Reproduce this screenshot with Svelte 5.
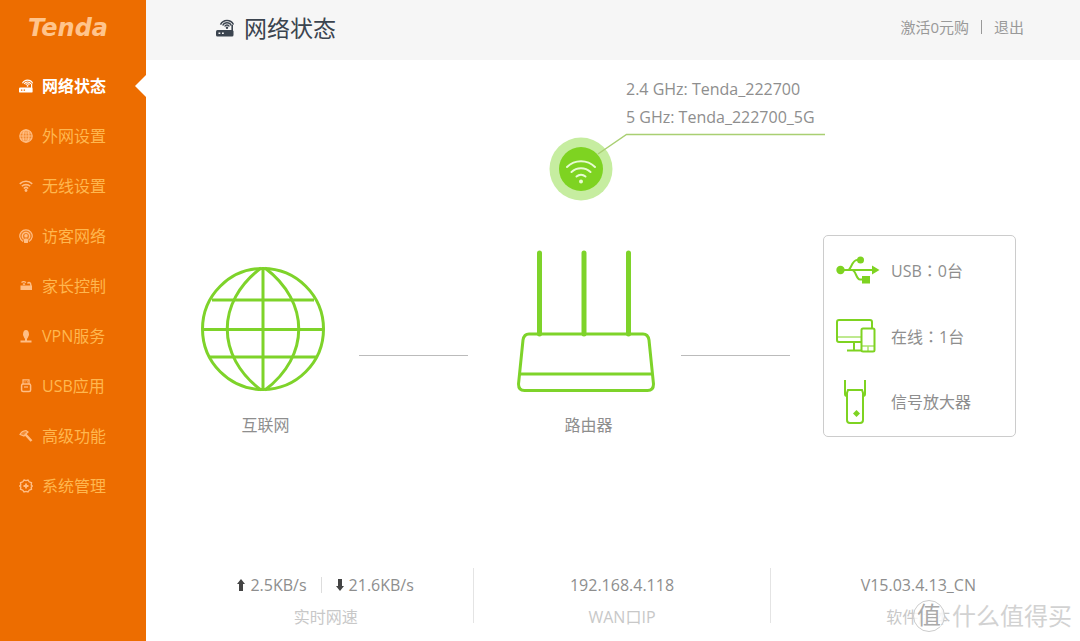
<script>
  const menu = [
    { icon: "router", label: "网络状态" },
    { icon: "globe", label: "外网设置" },
    { icon: "wifi", label: "无线设置" },
    { icon: "guest", label: "访客网络" },
    { icon: "parent", label: "家长控制" },
    { icon: "vpn", label: "VPN服务" },
    { icon: "usb", label: "USB应用" },
    { icon: "tool", label: "高级功能" },
    { icon: "gear", label: "系统管理" },
  ]

  const networks = ["2.4 GHz: Tenda_222700", "5 GHz: Tenda_222700_5G"]

  const devices = [
    { icon: "usb", label: "USB", count: "0台" },
    { icon: "online", label: "在线", count: "1台" },
    { icon: "extender", label: "信号放大器" },
  ]

  let active = $state("router")
</script>

{#snippet routerIcon(size)}
  <svg width={size} height={size} viewBox="0 0 18 18" fill="none" stroke="currentColor">
    <path d="M1.500 11h14.500q1.500 0 1.500 1.500v3.500q0 1.500-1.500 1.500h-14.500q-1.500 0-1.500-1.500v-3.500q0-1.500 1.500-1.500z" fill="currentColor" stroke="none" />
    <path d="M16.200 12V6" stroke-width="1.600" />
    <path d="M8.700 7.500a2.600 2.600 0 0 1 4.600 0M6.700 6.500a4.800 4.800 0 0 1 8.600 0M4.500 5.600a7.200 7.200 0 0 1 13 0" stroke-width="1.500" />
    <circle cx="11" cy="8.800" r="1.200" fill="currentColor" stroke="none" />
    <path d="M2.500 14.300h1.800M6 14.300h1.800" class="led" stroke-width="1.600" />
  </svg>
{/snippet}

{#snippet menuIcon(name)}
  {#if name === "router"}
    {@render routerIcon(14)}
  {:else}
    <svg width="14" height="14" viewBox="0 0 14 14" fill="none" stroke="currentColor" stroke-width="1.200">
      {#if name === "globe"}
        <circle cx="7" cy="7" r="6.200" fill="currentColor" fill-opacity="0.350" />
        <ellipse cx="7" cy="7" rx="3" ry="6.200" />
        <path d="M7 1v12M1 7h12M2 4h10M2 10h10" stroke-width="0.900" />
      {:else if name === "wifi"}
        <path d="M.8 4.800a9 9 0 0 1 12.400 0M2.800 7.300a6 6 0 0 1 8.400 0M4.800 9.500a3.200 3.200 0 0 1 4.400 0" stroke-width="1.600" />
        <circle cx="7" cy="11.500" r="1.400" fill="currentColor" stroke="none" />
      {:else if name === "guest"}
        <circle cx="7" cy="6.500" r="5.500" fill="currentColor" fill-opacity="0.250" stroke="none" />
        <path d="M4 12.500a6.200 6.200 0 1 1 6 0" />
        <path d="M4.500 9.800a3.700 3.700 0 1 1 5 0" />
        <circle cx="7" cy="6.800" r="1.700" fill="currentColor" stroke="none" />
        <path d="M4.500 10.500q2.500-2 5 0L8.800 14H5.200z" fill="currentColor" stroke="none" />
      {:else if name === "parent"}
        <path d="M1.500 6.500h11.500v4.500H1.500z" fill="currentColor" stroke="none" />
        <path d="M2.500 3.500q2-1.800 4.500 0M4 5.500q1-1 2 0M8.500 4.500q1.500-2 3 0L12 7" stroke-width="1.400" />
      {:else if name === "vpn"}
        <path d="M4 6q0-5 3-5t3 5L8.500 9.500h-3z" fill="currentColor" stroke="none" />
        <path d="M7 9v3M1.500 12.500h11" stroke-width="2" />
      {:else if name === "usb"}
        <path d="M4 5V.8h6V5M5.500 2.800h1M7.800 2.800h1" />
        <rect x="2.600" y="5" width="9" height="7.500" rx="1.500" stroke-width="1.500" />
        <path d="M5 8h4" />
      {:else if name === "tool"}
        <path d="M1 5.500Q2.500 2 7 1.500L9 3 6.500 5.200 5 7z" fill="currentColor" fill-opacity="0.400" />
        <path d="M6.500 5.500L12.500 12" stroke-width="2.500" />
      {:else}
        <path d="M5 1l2 .6L9 1l1.200 1.800 2.300 1L12.200 6l1 1-1 1.200.3 2-2.300 1L9 13l-2-.6L5 13l-1.200-1.800-2.300-1L1.800 8 .8 7l1-1-.3-2.200 2.300-1z" stroke-width="1.400" />
        <path d="M7 4.500v5M4.500 7h5" stroke-width="1.800" />
      {/if}
    </svg>
  {/if}
{/snippet}

{#snippet deviceIcon(name)}
  <svg width="44" height="46" viewBox="0 0 44 46" fill="none" stroke="currentColor" stroke-width="2">
    {#if name === "usb"}
      <circle cx="4.500" cy="23" r="4.200" fill="currentColor" stroke="none" />
      <path d="M4 23h34" />
      <path d="M43.500 23L36 18.500v9z" fill="currentColor" stroke="none" />
      <path d="M12 23c3 0 4-10 9-10h4M16 23c4 0 4 9.500 8 9.500h4" />
      <circle cx="24.500" cy="13" r="3.500" fill="currentColor" stroke="none" />
      <rect x="26" y="29" width="8" height="7.500" fill="currentColor" stroke="none" />
    {:else if name === "online"}
      <path d="M26 29H3q-2 0-2-2V9q0-2 2-2h31q2 0 2 2v6" />
      <path d="M2 24h24" stroke-width="1" />
      <path d="M18 29v8M11 37.500h15" />
      <rect x="25.500" y="15.500" width="13" height="23" rx="1.500" />
      <path d="M26 33h12" stroke-width="1" />
      <path d="M32 33.500v4.500" stroke-width="1" />
    {:else}
      <path d="M9 1v14q0 2 2 2M29 1v14q0 2-2 2" />
      <path d="M12 11h14l1 3v27q0 3-3 3H14q-3 0-3-3V14z" />
      <path d="M20.500 31l3.500 3.500-3.500 3.500-3.500-3.500z" fill="currentColor" stroke="none" />
    {/if}
  </svg>
{/snippet}

<div class="page">
  <aside>
    <div class="logo">Tenda</div>
    <nav>
      {#each menu as item}
        <button class="item" class:active={active === item.icon} onclick={() => (active = item.icon)}>
          {@render menuIcon(item.icon)}
          <span>{item.label}</span>
        </button>
      {/each}
    </nav>
  </aside>

  <div class="main">
    <header>
      <h1>{@render routerIcon(18)}网络状态</h1>
      <div class="links">
        <a href="#activate">激活0元购</a>
        <span class="bar"></span>
        <a href="#logout">退出</a>
      </div>
    </header>

    <main>
      <figure class="internet">
        <svg width="124" height="126" viewBox="0 0 124 126" fill="none" stroke="currentColor" stroke-width="3">
          <circle cx="62" cy="63" r="60.500" />
          <path d="M62 2v122M2 63.500h120M11 34h102M9 91h106" />
          <path d="M60 2C15 36 15 90 60 124M64 2c45 34 45 88 0 122" />
        </svg>
        <figcaption>互联网</figcaption>
      </figure>

      <span class="link-line"></span>

      <div class="router">
        <div class="callout">
          <ul>
            {#each networks as network}
              <li>{network}</li>
            {/each}
          </ul>
          <svg width="276" height="68" viewBox="0 0 276 68" fill="none">
            <circle cx="32" cy="36" r="31.500" fill="#c6eda0" />
            <circle cx="32" cy="36" r="22" fill="#7ed321" />
            <path d="M49 21L77.500 1.500H276" stroke="#a9cf72" stroke-width="1.500" />
            <g stroke="#e8fbd2" stroke-width="2" stroke-linecap="round">
              <path d="M18 34a20 20 0 0 1 28 0M22.500 39a14 14 0 0 1 19 0M27.500 43.500a7 7 0 0 1 9 0" />
            </g>
            <circle cx="32" cy="48.500" r="2" fill="#e8fbd2" />
          </svg>
        </div>
        <figure>
          <svg width="138" height="142" viewBox="0 0 138 142" fill="none" stroke="currentColor" stroke-width="3">
            <path d="M22.500 3v81M67 3v81M111.500 3v81" stroke-width="5" stroke-linecap="round" />
            <path d="M12 84h114q5 0 6 6l4.500 44q0 6.500-6 6.500H7.500q-6 0-6-6.500L6 90q1-6 6-6z" />
            <path d="M3 124h132" />
          </svg>
          <figcaption>路由器</figcaption>
        </figure>
      </div>

      <span class="link-line right"></span>

      <ul class="devices">
        {#each devices as device}
          <li>
            {@render deviceIcon(device.icon)}
            <span>{device.label}{#if device.count}<span class="colon">：</span>{device.count}{/if}</span>
          </li>
        {/each}
      </ul>
    </main>

    <footer>
      <div class="stat">
        <p class="value speed">
          <svg width="8" height="12" viewBox="0 0 8 12"><path d="M4 0l4 5H6v7H2V5H0z" fill="#444" /></svg>
          2.5KB/s
          <span class="sep"></span>
          <svg width="8" height="12" viewBox="0 0 8 12"><path d="M4 12L0 7h2V0h4v7h2z" fill="#444" /></svg>
          21.6KB/s
        </p>
        <p class="name">实时网速</p>
      </div>
      <span class="divider"></span>
      <div class="stat">
        <p class="value">192.168.4.118</p>
        <p class="name">WAN口IP</p>
      </div>
      <span class="divider"></span>
      <div class="stat">
        <p class="value">V15.03.4.13_CN</p>
        <p class="name">软件版本</p>
      </div>
    </footer>
  </div>

  <div class="watermark"><span class="badge">值</span>什么值得买</div>
</div>

<style>
  .page {
    position: relative;
    display: flex;
    min-height: 100vh;
    overflow: hidden;
    background: #fff;
    color: #8e8e8e;
    font-family: "Open Sans", "Noto Sans CJK SC", sans-serif;
    font-size: 16px;
    line-height: 24px;
  }

  svg {
    flex: none;
    display: block;
  }

  ul,
  p,
  h1,
  figure {
    margin: 0;
    padding: 0;
    list-style: none;
  }

  aside {
    flex: none;
    width: 146px;
    background: #ed6d00;
  }

  .logo {
    padding-left: 28px;
    height: 61px;
    line-height: 56px;
    color: #ffc48c;
    font-family: "DejaVu Sans", sans-serif;
    font-size: 24px;
    font-weight: bold;
    font-style: oblique;
  }

  .item {
    position: relative;
    display: flex;
    align-items: center;
    gap: 9px;
    width: 100%;
    height: 50px;
    padding: 0 0 0 19px;
    border: 0;
    background: none;
    color: #ffbe85;
    font: inherit;
    cursor: pointer;
  }

  .item span {
    color: #ffb74f;
  }

  .item.active,
  .item.active span {
    color: #fff;
    font-weight: bold;
  }

  .item.active::after {
    content: "";
    position: absolute;
    right: 0;
    top: 14px;
    border: 11px solid transparent;
    border-left-width: 0;
    border-right-color: #fff;
  }

  .led {
    stroke: #f7f7f7;
  }

  .item .led {
    stroke: #ed6d00;
  }

  .main {
    flex: 1;
    display: flex;
    flex-direction: column;
  }

  header {
    display: flex;
    align-items: center;
    justify-content: space-between;
    height: 60px;
    padding: 0 56px 4px 70px;
    box-sizing: border-box;
    background: #f6f6f6;
  }

  h1 {
    display: flex;
    align-items: center;
    gap: 10px;
    color: #3b444f;
    font-size: 23px;
    font-weight: normal;
  }

  .links {
    display: flex;
    align-items: center;
    gap: 12px;
    padding-bottom: 2px;
    font-size: 15px;
  }

  .links a {
    color: #999;
    text-decoration: none;
  }

  .bar {
    width: 1px;
    height: 14px;
    background: #999;
  }

  main {
    display: flex;
    align-items: flex-end;
    padding: 15px 64px 0 55px;
  }

  figure,
  .router {
    flex: none;
    color: #7ed32a;
  }

  figcaption {
    margin-top: 21px;
    padding-left: 5px;
    color: #8e8e8e;
    text-align: center;
  }

  .link-line {
    flex: 1;
    height: 1px;
    margin: 0 49px 81px 34px;
    background: #bbb;
  }

  .link-line.right {
    margin: 0 33px 81px 26px;
  }

  .router {
    width: 138px;
  }

  .callout {
    width: 276px;
    margin: 0 0 49px 32px;
  }

  .callout ul {
    padding: 0 0 2px 77px;
    color: #8e8e8e;
    line-height: 28px;
    white-space: nowrap;
  }

  .devices {
    flex: none;
    box-sizing: border-box;
    width: 193px;
    padding: 1px 12px;
    border: 1px solid #ccc;
    border-radius: 5px;
  }

  .devices li {
    display: flex;
    align-items: center;
    gap: 11px;
    height: 66px;
    color: #7ed321;
  }

  .devices span {
    color: #8e8e8e;
  }

  .colon {
    font-family: "Noto Sans CJK TC", sans-serif;
  }

  footer {
    display: flex;
    margin-top: auto;
    padding: 24px 14px 12px 32px;
  }

  .stat {
    flex: 1;
    padding-top: 5px;
    text-align: center;
  }

  .value {
    margin-bottom: 8px;
  }

  .speed {
    display: flex;
    align-items: center;
    justify-content: center;
    gap: 5px;
  }

  .sep {
    width: 1px;
    height: 16px;
    margin: 0 9px;
    background: #ddd;
  }

  .name {
    color: #c8c8c8;
  }

  .divider {
    width: 1px;
    height: 55px;
    background: #e4e4e4;
  }

  .watermark {
    position: absolute;
    right: 8px;
    bottom: 9px;
    display: flex;
    align-items: center;
    gap: 7px;
    color: #d2d2d2;
    font-size: 24px;
    line-height: 32px;
    text-shadow: 1px 1px 0 #fff;
  }

  .badge {
    width: 30px;
    height: 30px;
    border: 1px solid #ccc;
    border-radius: 50%;
    background: rgba(255, 255, 255, 0.8);
    color: #aaa;
    line-height: 28px;
    text-align: center;
  }
</style>
